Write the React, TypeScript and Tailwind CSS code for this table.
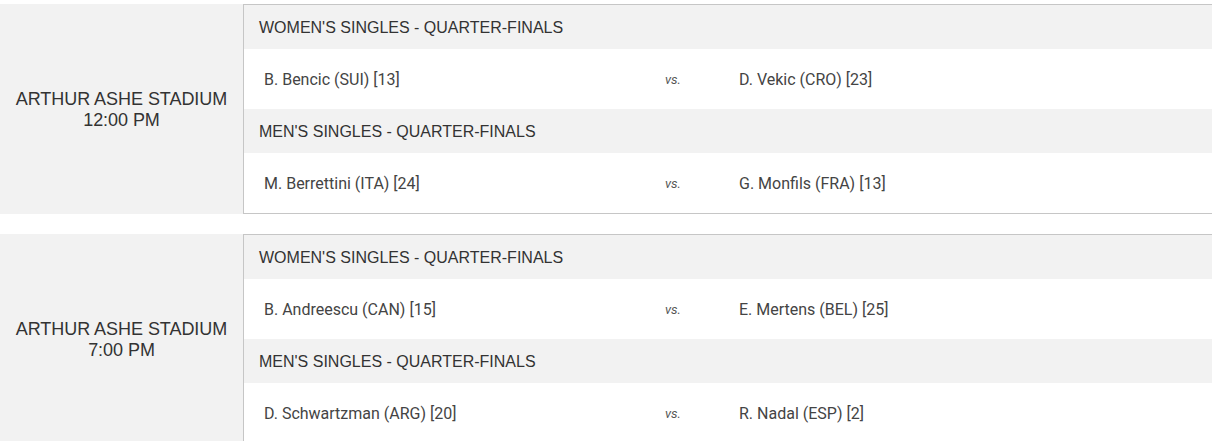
import React from "react";

type Match = { title: string; p1: string; p2: string };
type Block = { venue: string; time: string; matches: Match[] };

const blocks: Block[] = [
  {
    venue: "ARTHUR ASHE STADIUM",
    time: "12:00 PM",
    matches: [
      { title: "WOMEN'S SINGLES - QUARTER-FINALS", p1: "B. Bencic (SUI) [13]", p2: "D. Vekic (CRO) [23]" },
      { title: "MEN'S SINGLES - QUARTER-FINALS", p1: "M. Berrettini (ITA) [24]", p2: "G. Monfils (FRA) [13]" },
    ],
  },
  {
    venue: "ARTHUR ASHE STADIUM",
    time: "7:00 PM",
    matches: [
      { title: "WOMEN'S SINGLES - QUARTER-FINALS", p1: "B. Andreescu (CAN) [15]", p2: "E. Mertens (BEL) [25]" },
      { title: "MEN'S SINGLES - QUARTER-FINALS", p1: "D. Schwartzman (ARG) [20]", p2: "R. Nadal (ESP) [2]" },
    ],
  },
];

export default function App() {
  return (
    <div className="w-[1212px] h-[441px] overflow-hidden bg-white pt-[4px] flex flex-col gap-[20px]">
      {blocks.map((b, i) => (
        <div key={i} className="flex shrink-0">
          <div
            className="w-[243px] shrink-0 bg-[#f2f2f2] flex flex-col items-center justify-center pt-[1px] text-center text-[18px] leading-[21px] tracking-[-0.05px] text-[#333333]"
            style={{ fontFamily: '"Liberation Sans", Arial, sans-serif' }}
          >
            <div>{b.venue}</div>
            <div>{b.time}</div>
          </div>
          <div className="flex-1 border-l border-t border-b border-[#c6c6c6]">
            {b.matches.map((m, j) => (
              <div key={j}>
                <div
                  className="h-[44px] bg-[#f2f2f2] flex items-center pt-[1px] pl-[15px] text-[16px] text-[#333333]"
                  style={{ fontFamily: '"Liberation Sans", Arial, sans-serif' }}
                >
                  {m.title}
                </div>
                <div
                  className="h-[60px] bg-white flex items-center pt-[2px] pl-[20px] text-[16px] text-[#444444]"
                  style={{ fontFamily: 'Roboto, "Noto Sans", sans-serif' }}
                >
                  <div className="w-[401px] shrink-0">{m.p1}</div>
                  <div className="w-[74px] shrink-0 italic text-[13px] text-[#555555]">vs.</div>
                  <div>{m.p2}</div>
                </div>
              </div>
            ))}
          </div>
        </div>
      ))}
    </div>
  );
}
